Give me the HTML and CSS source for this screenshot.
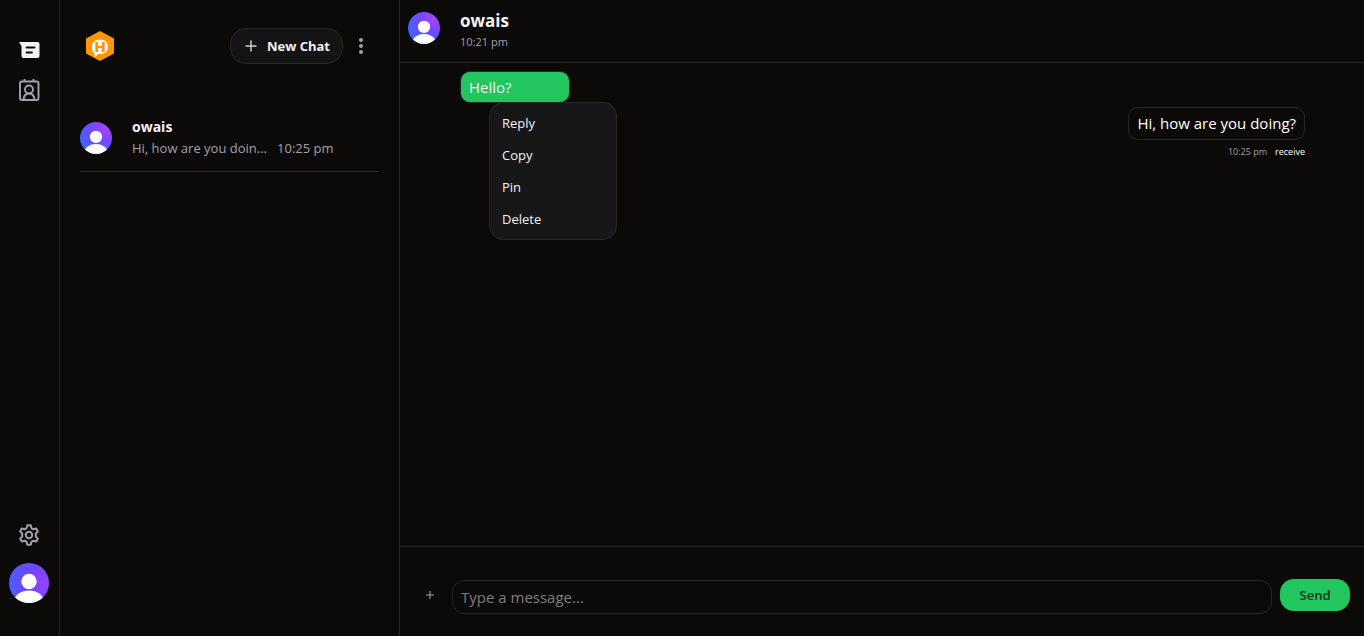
FILE: index.html
```html
<!DOCTYPE html>
<html lang="en">
<head>
<meta charset="utf-8">
<title>Chat</title>
<link rel="stylesheet" href="styles.css">
</head>
<body>
<svg class="defs" aria-hidden="true">
  <defs>
    <radialGradient id="violet" cx="0.8" cy="0.2" r="0.85">
      <stop offset="0" stop-color="#a943ff"/>
      <stop offset="0.5" stop-color="#7548ff"/>
      <stop offset="1" stop-color="#3f63ff"/>
    </radialGradient>
    <radialGradient id="violet-side" cx="0.9" cy="0.5" r="0.9">
      <stop offset="0" stop-color="#9b40fc"/>
      <stop offset="0.5" stop-color="#7047ff"/>
      <stop offset="1" stop-color="#4a5cff"/>
    </radialGradient>
    <clipPath id="disc"><circle cx="20" cy="20" r="20"/></clipPath>
    <symbol id="person" viewBox="0 0 40 40">
      <g clip-path="url(#disc)" fill="#fff">
        <circle cx="20" cy="18.5" r="7.7"/>
        <ellipse cx="20" cy="38" rx="14.5" ry="10.5"/>
      </g>
    </symbol>
  </defs>
</svg>
<div class="app">
  <nav class="rail">
    <div class="rail-group">
      <button class="icon-button active" aria-label="Chats">
        <svg width="24" height="24" viewBox="0 0 24 24"><path fill="currentColor" d="M2 4h18.500a2 2 0 0 1 2 2v12a2 2 0 0 1-2 2H6.500a2 2 0 0 1-2-2V8z"/><path d="M9.500 9.500h8M9.500 14.500h5.500" stroke="#0c0a09" stroke-width="1.800" stroke-linecap="round"/></svg>
      </button>
      <button class="icon-button" aria-label="Contacts">
        <svg width="24" height="24" viewBox="0 0 24 24" fill="none" stroke="currentColor" stroke-width="1.900"><rect x="3" y="3.500" width="18.500" height="18.500" rx="2"/><path d="M7.500 1v2.500M16.500 1v2.500"/><circle cx="12" cy="11.500" r="4"/><path d="M6.500 22c.3-4 2-6.500 5.500-6.500s5.200 2.500 5.500 6.500"/></svg>
      </button>
    </div>
    <div class="rail-group">
      <button class="icon-button" aria-label="Settings">
        <svg width="24" height="24" viewBox="0 0 24 24" fill="none" stroke="currentColor" stroke-width="2" stroke-linejoin="round"><path d="M10.300 2.300h3.400l.7 2.800 2 1.200 2.800-.8 1.700 2.900-2.100 2.100v3l2.100 2.100-1.700 2.900-2.800-.8-2 1.200-.7 2.800h-3.400l-.7-2.800-2-1.200-2.800.8-1.700-2.900 2.100-2.100v-3L3.100 8.400l1.700-2.900 2.800.8 2-1.200z"/><circle cx="12" cy="12" r="3.200"/></svg>
      </button>
      <button class="icon-button" aria-label="Profile">
        <svg class="avatar large" viewBox="0 0 40 40"><circle cx="20" cy="20" r="20" fill="url(#violet-side)"/><use href="#person"/></svg>
      </button>
    </div>
  </nav>

  <aside class="chats">
    <header class="chats-header">
      <svg class="logo" width="40" height="40" viewBox="0 0 40 40" role="img" aria-label="Logo">
        <path fill="#ff9500" d="M20 5l14 7.500v15L20 35 6 27.500v-15z"/>
        <path fill="#fff" d="M20 13.500c5 0 8 3.200 8 7.300s-3 7.200-8 7.200h-2l-3 3.500-.5-4C12.800 26 12 23.500 12 20.800c0-4.100 3-7.300 8-7.300z"/>
        <text class="logo-letter" x="20" y="26" text-anchor="middle">H</text>
      </svg>
      <div class="chats-actions">
        <button class="new-chat">
          <svg width="12" height="12" viewBox="0 0 12 12" fill="none" stroke="currentColor" stroke-width="1.500"><path d="M6 .5v11M.5 6h11"/></svg>
          New Chat
        </button>
        <button class="icon-button" aria-label="More">
          <svg width="20" height="20" viewBox="0 0 20 20" fill="currentColor"><circle cx="10" cy="4" r="2"/><circle cx="10" cy="10" r="2"/><circle cx="10" cy="16" r="2"/></svg>
        </button>
      </div>
    </header>
    <a class="chat" href="#owais">
      <svg class="avatar" viewBox="0 0 40 40"><circle cx="20" cy="20" r="20" fill="url(#violet)"/><use href="#person"/></svg>
      <span class="chat-text">
        <strong class="chat-name">owais</strong>
        <span class="chat-preview"><span>Hi, how are you doin...</span><time>10:25 pm</time></span>
      </span>
    </a>
  </aside>

  <main class="conversation">
    <header class="contact">
      <svg class="avatar" viewBox="0 0 40 40"><circle cx="20" cy="20" r="20" fill="url(#violet)"/><use href="#person"/></svg>
      <div>
        <h1 class="contact-name">owais</h1>
        <time class="contact-time">10:21 pm</time>
      </div>
    </header>

    <section class="messages">
      <div class="message sent">
        <p class="bubble">Hello?</p>
        <div class="menu" role="menu">
          <button class="menu-item" role="menuitem">Reply</button>
          <button class="menu-item" role="menuitem">Copy</button>
          <button class="menu-item" role="menuitem">Pin</button>
          <button class="menu-item" role="menuitem">Delete</button>
        </div>
      </div>
      <div class="message received">
        <p class="bubble">Hi, how are you doing?</p>
        <div class="meta"><time>10:25 pm</time><span class="status">receive</span></div>
      </div>
    </section>

    <form class="composer">
      <button class="attach" type="button" aria-label="Attach">
        <svg width="10" height="10" viewBox="0 0 10 10" stroke="currentColor"><path d="M5 1v8M1 5h8"/></svg>
      </button>
      <input class="composer-input" type="text" placeholder="Type a message..." aria-label="Message">
      <button class="send" type="button">Send</button>
    </form>
  </main>
</div>
</body>
</html>
```
FILE: styles.css
```css
* { box-sizing: border-box; }

body {
  margin: 0;
  background: #0c0a09;
  color: #f2f2f2;
  font-family: "Open Sans", "Noto Sans", sans-serif;
  font-size: 15px;
  line-height: 24px;
}

button, input { font: inherit; color: inherit; }
button { border: 0; padding: 0; background: none; cursor: pointer; }
p, h1 { margin: 0; }
svg { display: block; flex: none; }
.defs { position: absolute; width: 0; height: 0; }

.app {
  display: grid;
  grid-template-columns: 60px 340px minmax(0, 1fr);
  min-height: 100vh;
}

.rail {
  display: flex;
  flex-direction: column;
  justify-content: space-between;
  padding: 38px 1px 33px 0;
  border-right: 1px solid #27272a;
}
.rail-group {
  display: flex;
  flex-direction: column;
  align-items: center;
  gap: 16px;
}
.icon-button { color: #a1a1aa; }
.icon-button.active { color: #f2f2f2; }

.avatar { width: 32px; height: 32px; }
.avatar.large { width: 40px; height: 40px; }

.chats {
  padding: 26px 20px;
  border-right: 1px solid #27272a;
}
.chats-header {
  display: flex;
  align-items: center;
  justify-content: space-between;
}
.logo-letter { fill: #ff9500; font: bold 14px "DejaVu Sans", sans-serif; }
.chats-actions { display: flex; align-items: center; gap: 8px; padding-right: 8px; }
.new-chat {
  display: flex;
  align-items: center;
  gap: 10px;
  height: 36px;
  padding: 0 12px 0 14px;
  border: 1px solid #27272a;
  border-radius: 16px;
  background: #141414;
  font-size: 13px;
  font-weight: 700;
}
.new-chat svg { color: #cccccc; }

.chat {
  display: flex;
  align-items: center;
  gap: 20px;
  margin-top: 50px;
  padding-bottom: 12px;
  border-bottom: 1px solid #27272a;
  color: inherit;
  text-decoration: none;
}
.chat-text { display: flex; flex-direction: column; }
.chat-name { font-size: 14px; font-weight: 700; line-height: 22px; }
.chat-preview {
  display: flex;
  gap: 10px;
  color: #a1a1aa;
  font-size: 13px;
  line-height: 21px;
}

.conversation { display: flex; flex-direction: column; }
.contact {
  display: flex;
  gap: 20px;
  padding: 12px 8px;
  border-bottom: 1px solid #27272a;
}
.contact-name { font-size: 17px; font-weight: 700; line-height: 18px; }
.contact-time { display: block; margin-top: 4px; color: #a1a1aa; font-size: 11px; line-height: 16px; }

.messages {
  flex: 1;
  display: flex;
  flex-direction: column;
  gap: 4px;
  padding: 8px 59px;
}
.message { position: relative; display: flex; flex-direction: column; }
.sent { align-self: flex-start; padding-left: 1px; }
.received { align-self: flex-end; align-items: flex-end; }
.bubble {
  padding: 3px 8px;
  border: 1px solid #27272a;
  border-radius: 10px;
}
.sent .bubble { min-width: 110px; background: #22c55e; }
.received .bubble { padding-bottom: 4px; color: #ffffff; }
.meta { display: flex; gap: 8px; font-size: 9px; color: #a1a1aa; }
.status { color: #ffffff; }

.menu {
  position: absolute;
  top: 31px;
  left: 30px;
  display: flex;
  flex-direction: column;
  width: 128px;
  padding: 4px;
  border: 1px solid #27272a;
  border-radius: 14px;
  background: #171717;
}
.menu-item {
  padding: 6px 8px;
  font-size: 13px;
  font-weight: 500;
  line-height: 20px;
  text-align: left;
}

.composer {
  display: flex;
  align-items: flex-start;
  gap: 8px;
  padding: 32px 14px 22px 16px;
  border-top: 1px solid #27272a;
}
.attach { display: grid; place-items: center; width: 28px; height: 32px; color: #a1a1aa; }
.composer-input {
  flex: 1;
  min-width: 0;
  height: 34px;
  margin-top: 1px;
  padding: 0 8px;
  border: 1px solid #27272a;
  border-radius: 12px;
  background: transparent;
}
.composer-input::placeholder { color: #7f7f7f; }
.send {
  height: 32px;
  width: 70px;
  border-radius: 14px;
  background: #22c55e;
  color: #0b3b1c;
  font-size: 13px;
  font-weight: 600;
}
```
